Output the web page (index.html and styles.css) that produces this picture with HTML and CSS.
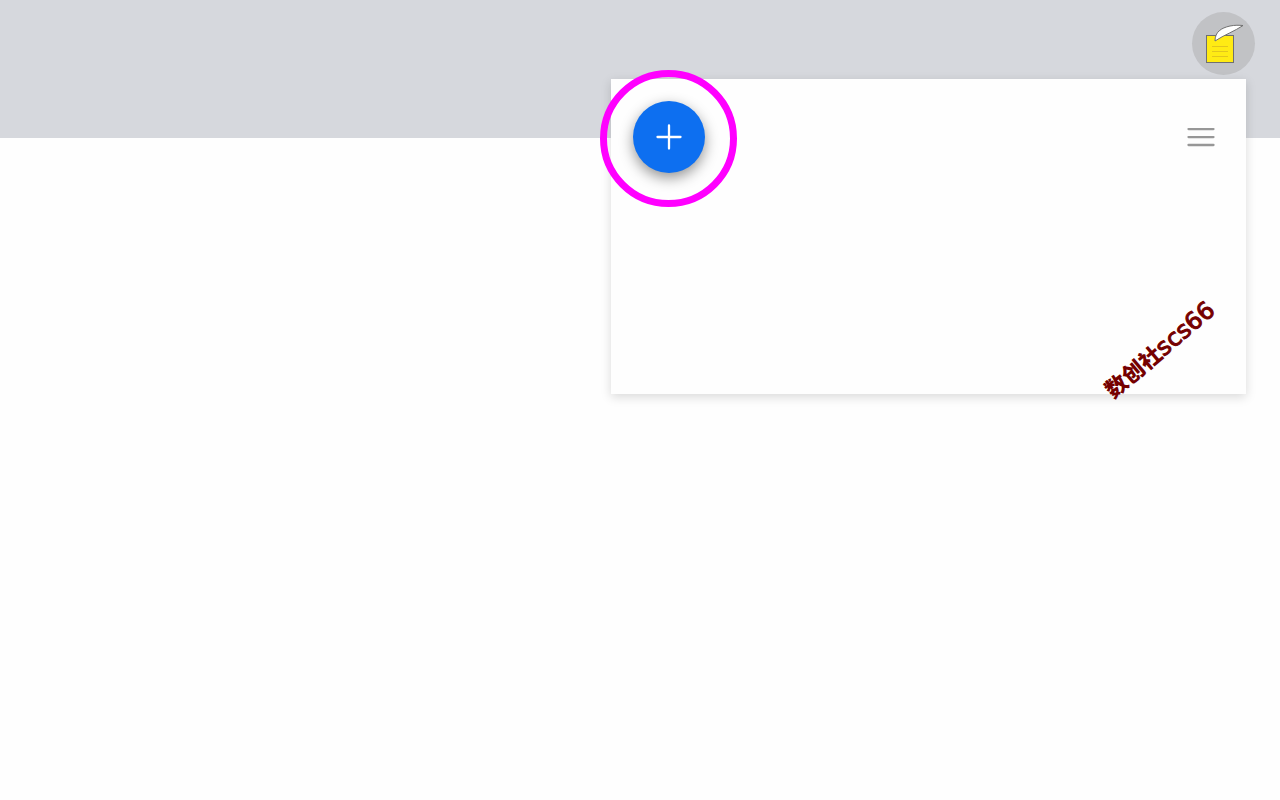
FILE: index.html
```html
<!DOCTYPE html>
<html lang="zh">
<head>
<meta charset="utf-8">
<meta name="viewport" content="width=device-width, initial-scale=1">
<title>Notes</title>
<link rel="stylesheet" href="styles.css">
</head>
<body>
<header class="banner">
  <button class="note-button" type="button" aria-label="Notes">
    <svg class="note-icon" viewBox="0 0 63 63" aria-hidden="true">
      <rect x="14.5" y="23.5" width="27" height="27" fill="#ffeb14" stroke="#707070"/>
      <path d="M20 34.500H36M20 39.500H36M20 44.500H36" fill="none" stroke="#e2c61c"/>
      <path d="M23 29C23 20 29 16 38 14C43 13 47 13.200 51 13.500C43 19 32 23 23 29Z" fill="#fff" stroke="#707070"/>
    </svg>
  </button>
</header>
<main class="content">
  <section class="card">
    <div class="toolbar">
      <button class="add-button" type="button" aria-label="Add">
        <svg class="add-icon" viewBox="0 0 26 26" aria-hidden="true">
          <path d="M13 1.500V24.500M1.500 13H24.500" fill="none" stroke="#fff" stroke-width="2.300" stroke-linecap="round"/>
        </svg>
      </button>
      <button class="menu-button" type="button" aria-label="Menu">
        <svg class="menu-icon" viewBox="0 0 28 20" aria-hidden="true">
          <path d="M1.500 2.100H26.500M1.500 10.100H26.500M1.500 18H26.500" fill="none" stroke="#979797" stroke-width="2.300" stroke-linecap="round"/>
        </svg>
      </button>
    </div>
    <span class="watermark">数创社<span class="watermark-id">scs66</span></span>
  </section>
</main>
</body>
</html>
```
FILE: styles.css
```css
* {
  box-sizing: border-box;
}

body {
  min-height: 100vh;
  margin: 0;
  background: #fefefe;
  font-family: "Noto Sans", "Noto Sans CJK SC", sans-serif;
}

button {
  display: grid;
  place-items: center;
  padding: 0;
  border: 0;
  background: none;
  cursor: pointer;
}

.banner {
  display: flex;
  justify-content: flex-end;
  align-items: flex-start;
  min-height: 138px;
  padding: 12px 25px;
  background: #d6d8dd;
}

.note-button {
  width: 63px;
  height: 63px;
  border-radius: 50%;
  background: #c1c2c5;
}

.note-icon {
  width: 63px;
  height: 63px;
}

.content {
  display: flex;
  justify-content: flex-end;
  margin-top: -59px;
  padding: 0 34px 34px;
}

.card {
  position: relative;
  width: 635px;
  max-width: 100%;
  min-height: 315px;
  padding: 22px 31px 22px 22px;
  background: #fefefe;
  box-shadow: 0 3px 10px rgba(0, 0, 0, 0.15);
}

.toolbar {
  display: flex;
  justify-content: space-between;
  align-items: center;
}

.add-button {
  position: relative;
  width: 72px;
  height: 72px;
  border-radius: 50%;
  background: #0d6ff0;
  box-shadow: 0 5px 14px rgba(0, 0, 0, 0.42);
}

/* highlight ring around the add button */
.add-button::after {
  content: "";
  position: absolute;
  inset: -31px -32px -34px -33px;
  border: 7px solid #ff00ff;
  border-radius: 50%;
}

.add-icon {
  width: 26px;
  height: 26px;
}

.menu-icon {
  width: 28px;
  height: 20px;
}

.watermark {
  position: absolute;
  right: 19px;
  bottom: 28px;
  color: #750000;
  font-size: 22px;
  font-weight: 900;
  line-height: 32px;
  white-space: nowrap;
  transform: rotate(-40deg);
}

.watermark-id {
  font-family: "DejaVu Sans", sans-serif;
  font-size: 24px;
  font-weight: 400;
  -webkit-text-stroke: 1px #750000;
}
```
